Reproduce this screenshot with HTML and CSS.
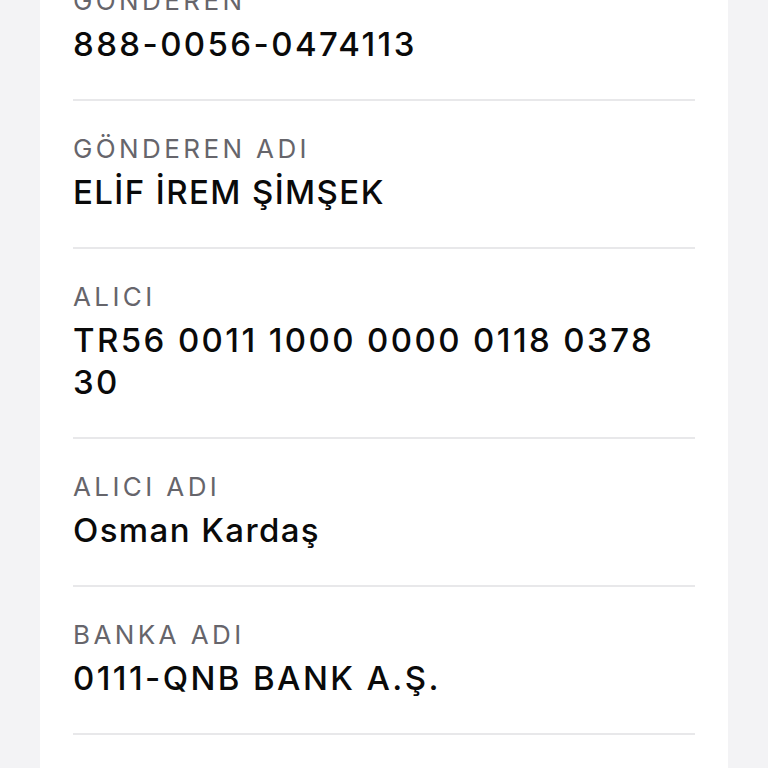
FILE: index.html
```html
<!DOCTYPE html>
<html lang="tr">
<head>
    <meta charset="UTF-8">
    <meta name="viewport" content="width=device-width, initial-scale=1.0">
    <title>Dekont</title>
    <link rel="stylesheet" href="styles.css">
</head>
<body>
    <div class="card">
        <div class="details">
            <div class="row">
                <div class="label">GÖNDEREN</div>
                <div class="value num">888-0056-0474113</div>
            </div>
            <div class="row">
                <div class="label">GÖNDEREN ADI</div>
                <div class="value">ELİF İREM ŞİMŞEK</div>
            </div>
            <div class="row">
                <div class="label">ALICI</div>
                <div class="value num">TR56 0011 1000 0000 0118 0378 30</div>
            </div>
            <div class="row">
                <div class="label">ALICI ADI</div>
                <div class="value">Osman Kardaş</div>
            </div>
            <div class="row">
                <div class="label">BANKA ADI</div>
                <div class="value num">0111-QNB BANK A.Ş.</div>
            </div>
        </div>
    </div>
</body>
</html>
```

FILE: styles.css
```css
body {
    margin: 0;
    background: #f3f3f5;
    font-family: Inter, "Noto Sans", sans-serif;
    overflow: hidden;
}
.card {
    background: #fff;
    margin-left: 40px;
    width: 688px;
    padding: 0 33px 120px;
    box-sizing: border-box;
}
.details {
    margin-top: -47px;
}
.row {
    padding: 33px 0 34px;
    border-bottom: 2px solid #e8e8ea;
}
.label {
    font-size: 26px;
    line-height: 30px;
    letter-spacing: 3.4px;
    color: #66656b;
    margin-bottom: 7px;
}
.value {
    font-size: 33px;
    line-height: 42px;
    letter-spacing: 1.4px;
    color: #0a0a0a;
    font-weight: 500;
}
.value.num {
    letter-spacing: 2.4px;
}
```
